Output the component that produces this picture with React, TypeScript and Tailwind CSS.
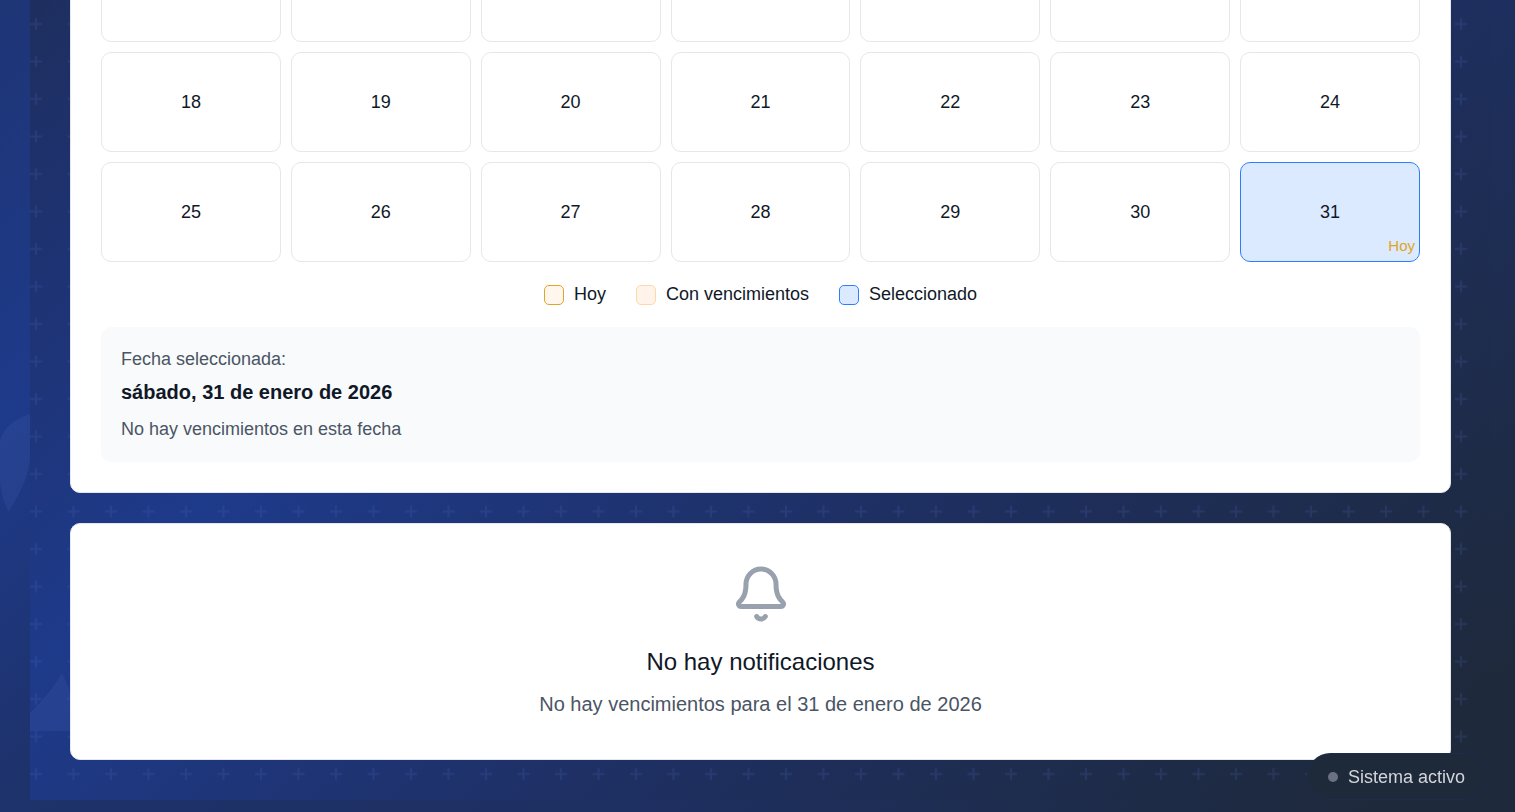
import { clsx } from "clsx";
import { useState } from "react";

type Day = { day: number; today?: boolean };

const WEEKS: Day[][] = [
  [11, 12, 13, 14, 15, 16, 17].map(day => ({ day })),
  [18, 19, 20, 21, 22, 23, 24].map(day => ({ day })),
  [25, 26, 27, 28, 29, 30, 31].map(day => ({ day, today: day === 31 })),
];

const WEEKDAYS = ["domingo", "lunes", "martes", "miércoles", "jueves", "viernes", "sábado"];

const LEGEND = [
  { label: "Hoy", swatch: "bg-[#fff7ed] border-[#e0a526]" },
  { label: "Con vencimientos", swatch: "bg-[#fff3ea] border-[#fed7aa]" },
  { label: "Seleccionado", swatch: "bg-blue-100 border-blue-500" },
];

/* ─── Background decoration ───────────────────────────── */
function PlusPattern() {
  return (
    <svg className="absolute inset-0 w-full h-full" aria-hidden="true">
      <defs>
        <pattern id="plus" width="37.5" height="37.5" y="-0.5" patternUnits="userSpaceOnUse">
          <path d="M5 12.5h2v5h5v2H7v5H5v-5H0v-2h5z" fill="#4a6ac0" fillOpacity="0.2" />
        </pattern>
      </defs>
      <rect width="100%" height="100%" fill="url(#plus)" />
      <path d="M210 520c2-12 10-8 18-8 3-16 26-20 32-6l4 14z" fill="#5b7bd0" fillOpacity="0.13" />
      <path d="M0 800V782C12 770 24 756 32 742C42 762 48 780 47 800z" fill="#5b7bd0" fillOpacity="0.13" />
    </svg>
  );
}

/* ─── Single calendar day ─────────────────────────────── */
function DayCell({ day, today, selected, onSelect }: Day & { selected: boolean; onSelect: () => void }) {
  return (
    <button
      type="button"
      onClick={onSelect}
      aria-pressed={selected}
      className={clsx(
        "relative h-[100px] rounded-[10px] border text-lg text-gray-900",
        selected ? "bg-blue-100 border-blue-500" : "bg-white border-gray-200"
      )}
    >
      {day}
      {today && <span className="absolute right-1 bottom-1 text-[15px] leading-[22px] font-medium text-[#e0a526]">Hoy</span>}
    </button>
  );
}

/* ─── Bell ────────────────────────────────────────────── */
function BellOutline() {
  return (
    <svg viewBox="0 0 24 24" className="w-15 h-15 text-gray-400" fill="none" stroke="currentColor"
      strokeWidth="2" strokeLinecap="round" strokeLinejoin="round" aria-hidden="true">
      <path d="M10.268 21a2 2 0 0 0 3.464 0" />
      <path d="M3.262 15.326A1 1 0 0 0 4 17h16a1 1 0 0 0 .74-1.673C19.41 13.956 18 12.499 18 8A6 6 0 0 0 6 8c0 4.499-1.411 5.956-2.738 7.326" />
    </svg>
  );
}

export default function App() {
  const [selected, setSelected] = useState(31);
  const weekday = WEEKDAYS[(selected + 3) % 7];

  return (
    <div className="relative h-screen overflow-hidden font-['Liberation_Sans',Arial,sans-serif] text-gray-900 bg-[linear-gradient(135deg,#1e3575_0px,#1e3a8a_300px,#1e326b_570px,#1e2f60_1050px,#1e293b_1550px)]">
      {/* Leaf shape behind the panel */}
      <svg className="absolute left-0 top-[410px] w-[30px] h-[110px]" aria-hidden="true">
        <path d="M0 30C6 14 18 8 30 4V50C26 76 16 88 9 102C3 92 0 80 0 66z" fill="#5b7bd0" fillOpacity="0.13" />
      </svg>

      <main className="relative flex flex-col gap-[30px] ml-[30px] mr-6 px-10 pb-10 -mt-[69px] pt-0 bg-[linear-gradient(135deg,#1e2d58_0px,#1e3270_220px,#1e3a8a_530px,#1e2f62_1020px,#1e293b_1570px)]">
        <PlusPattern />

        <section className="relative bg-white rounded-[10px] border border-gray-200 px-[30px] pb-[30px]">
          <div className="flex flex-col gap-[10px] pt-[10px]">
            {WEEKS.map(week => (
              <div key={week[0].day} className="grid grid-cols-7 gap-[10px]">
                {week.map(d => (
                  <DayCell key={d.day} {...d} selected={selected === d.day} onSelect={() => setSelected(d.day)} />
                ))}
              </div>
            ))}
          </div>

          <div className="flex justify-center gap-[30px] mt-5 text-lg leading-[25px]">
            {LEGEND.map(item => (
              <div key={item.label} className="flex items-center gap-[10px]">
                <span className={clsx("w-5 h-5 rounded-[5px] border", item.swatch)} />
                <span>{item.label}</span>
              </div>
            ))}
          </div>

          <div className="mt-5 p-5 rounded-[10px] bg-gray-50">
            <p className="text-lg leading-[25px] text-gray-600">Fecha seleccionada:</p>
            <p className="mt-[5px] text-xl leading-[30px] font-bold">{weekday}, {selected} de enero de 2026</p>
            <p className="mt-[10px] text-lg leading-[25px] text-gray-600">No hay vencimientos en esta fecha</p>
          </div>
        </section>

        <section className="relative flex flex-col items-center bg-white rounded-[10px] border border-gray-200 py-10 text-center">
          <BellOutline />
          <h3 className="mt-5 text-2xl leading-[35px]">No hay notificaciones</h3>
          <p className="mt-[10px] text-xl leading-[30px] text-gray-600">No hay vencimientos para el {selected} de enero de 2026</p>
        </section>
      </main>

      {/* System status */}
      <div className="fixed right-[29px] bottom-3 flex items-center gap-[10px] h-[47px] px-5 rounded-full border border-blue-900/20 bg-gray-800 text-lg text-gray-300" role="status">
        <span className="w-[10px] h-[10px] rounded-full bg-gray-500" />
        Sistema activo
      </div>
    </div>
  );
}
